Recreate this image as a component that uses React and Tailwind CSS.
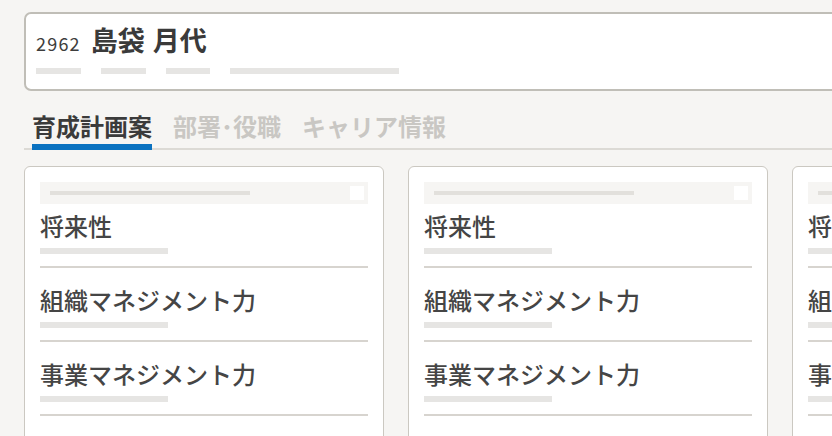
import React from "react";

const font = { fontFamily: '"Noto Sans CJK JP", "Noto Sans", sans-serif' };

function Row({ label, first }) {
  return (
    <div className={first ? "pt-[4px]" : "pt-[14px]"}>
      <div className="text-[24px] leading-[36px] font-medium text-[#454545] whitespace-nowrap">{label}</div>
      <div className="mt-[4px] h-[6px] w-[128px] bg-[#e6e5e3]" />
      <div className="mt-[12px] h-[2px] bg-[#d7d4cf]" />
    </div>
  );
}

function Card() {
  return (
    <div className="w-[360px] h-[300px] shrink-0 bg-white border border-[#cbc8c1] rounded-[6px] px-[15px] pt-[15px]">
      <div className="relative h-[22px] bg-[#f6f5f3] flex items-center pl-[10px]">
        <div className="w-[200px] h-[4px] bg-[#e2e0dc]" />
        <div className="absolute right-[4px] top-[4px] w-[14px] h-[14px] bg-white" />
      </div>
      <Row label="将来性" first />
      <Row label="組織マネジメント力" />
      <Row label="事業マネジメント力" />
    </div>
  );
}

export default function App() {
  return (
    <div style={font} className="w-[832px] h-[436px] overflow-hidden bg-[#f6f5f3] pt-[12px] pl-[24px]">
      <div className="w-[1000px] h-[79px] bg-white border-2 border-[#c0beb7] rounded-[7px] pl-[10px] pt-[8px]">
        <div className="flex items-baseline h-[36px] leading-[36px]">
          <span className="text-[18px] text-[#3d3d3d] tracking-[1.2px]">2962</span>
          <span className="ml-[10px] text-[27px] font-semibold text-[#3a3a3a]">島袋</span>
          <span className="ml-[8px] text-[27px] font-semibold text-[#3a3a3a]">月代</span>
        </div>
        <div className="mt-[10px] flex gap-[20px]">
          <div className="h-[6px] w-[45px] bg-[#e6e5e3]" />
          <div className="h-[6px] w-[45px] bg-[#e6e5e3]" />
          <div className="h-[6px] w-[44px] bg-[#e6e5e3]" />
          <div className="h-[6px] w-[169px] bg-[#e6e5e3]" />
        </div>
      </div>

      <div className="mt-[19px] flex gap-[21px] pl-[8px] border-b-2 border-[#dcdad5]">
        <div className="flex flex-col -mb-[2px]">
          <span className="text-[24px] leading-[32px] font-bold text-[#3b3b3b]">育成計画案</span>
          <div className="mt-[2px] h-[6px] bg-[#0b72c0]" />
        </div>
        <div className="flex flex-col">
          <span className="text-[24px] leading-[32px] font-bold text-[#c9c7c3]">部署･役職</span>
        </div>
        <div className="flex flex-col">
          <span className="text-[24px] leading-[32px] font-bold text-[#c9c7c3]">キャリア情報</span>
        </div>
      </div>

      <div className="mt-[16px] flex gap-[24px]">
        <Card />
        <Card />
        <Card />
      </div>
    </div>
  );
}
